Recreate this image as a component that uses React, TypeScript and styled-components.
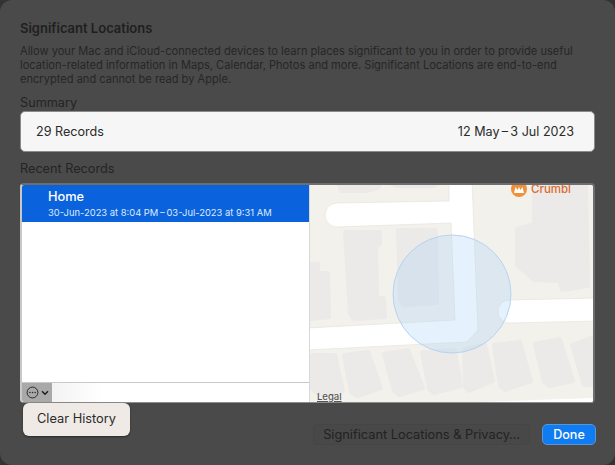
import styled, { createGlobalStyle } from 'styled-components';

const GlobalStyle = createGlobalStyle`
  html, body {
    margin: 0;
    padding: 0;
    width: 615px;
    height: 465px;
    overflow: hidden;
    background: #333333;
    font-family: "Inter", "Liberation Sans", sans-serif;
  }
`;

const Sheet = styled.div`
  position: relative;
  width: 615px;
  height: 465px;
  box-sizing: border-box;
  padding: 20px 20px 0 20px;
  background: #4a4a4a;
  border-radius: 12px;
  color: #222222;
`;

const Title = styled.h1`
  margin: 0;
  height: 17px;
  line-height: 17px;
  font-size: 13px;
  font-weight: 600;
  color: #1f1f1f;
`;

const Description = styled.p`
  margin: 7px 0 0;
  width: 560px;
  font-size: 11.1px;
  line-height: 14px;
  color: #262626;
`;

const SectionLabel = styled.div`
  margin: 8px 0 0;
  height: 17px;
  line-height: 17px;
  font-size: 12.7px;
  color: #242424;
`;

const SummaryBox = styled.div`
  display: flex;
  align-items: center;
  justify-content: space-between;
  box-sizing: border-box;
  height: 41px;
  padding: 0 20px 0 15px;
  background: #f6f6f6;
  border: 1px solid #8a8a8a;
  border-radius: 5px;
  font-size: 12.6px;
  color: #2a2a2a;
`;

const RecordsBox = styled.div`
  display: flex;
  box-sizing: border-box;
  height: 220px;
  margin-top: 6px;
  background: #ffffff;
  border: solid;
  border-width: 2px 2px 1px 2px;
  border-color: #6e6e6e #6e6e6e #8c8c8c #c8c8c8;
  border-radius: 4px;
  overflow: hidden;
`;

const ListColumn = styled.div`
  display: flex;
  flex-direction: column;
  width: 287px;
  flex: none;
  background: #ffffff;
  border-right: 1px solid #d8d8d8;
`;

const ListBody = styled.div`
  flex: 1;
`;

const SelectedRow = styled.div`
  box-sizing: border-box;
  height: 37px;
  padding: 4px 0 0 26px;
  background: #0a63dc;
  color: #ffffff;
`;

const RowTitle = styled.div`
  height: 16px;
  line-height: 16px;
  font-size: 12.8px;
  font-weight: 500;
`;

const RowDates = styled.div`
  height: 13px;
  line-height: 13px;
  margin-top: 1px;
  font-size: 9.4px;
  color: #dfeaff;
`;

const ListFooter = styled.div`
  display: flex;
  height: 19px;
  border-top: 1px solid #c9c9c9;
  background: linear-gradient(90deg, #ececec 0, #ffffff 80px);
`;

const ActionButton = styled.div`
  display: flex;
  align-items: center;
  justify-content: center;
  gap: 2px;
  width: 30px;
  background: #a9a9a9;
  color: #2a2a2a;
`;

const MapPane = styled.div`
  position: relative;
  flex: 1;
  background: #f3f1ec;
  overflow: hidden;
`;

const MapDrawing = styled.svg`
  display: block;
  width: 100%;
  height: 100%;
  filter: blur(0.5px);
`;

const LegalLink = styled.span`
  position: absolute;
  left: 7px;
  bottom: 0;
  font-size: 9.5px;
  font-weight: 500;
  color: #555555;
  text-decoration: underline;
`;

const PoiLabel = styled.span`
  position: absolute;
  top: -4px;
  left: 201px;
  display: flex;
  align-items: center;
  gap: 4px;
  line-height: 8px;
  font-size: 11.5px;
  font-weight: 500;
  color: #dd6a2d;
`;

const PoiBadge = styled.span`
  display: flex;
  align-items: center;
  justify-content: center;
  width: 16px;
  height: 16px;
  border-radius: 50%;
  background: #f0913a;
`;

const Footer = styled.div`
  display: flex;
  justify-content: flex-end;
  align-items: center;
  gap: 12px;
  margin: 21px -1px 0 0;
`;

const SecondaryButton = styled.div`
  box-sizing: border-box;
  height: 21px;
  line-height: 19px;
  padding: 0 9px;
  border-radius: 4px;
  background: #484848;
  border: 1px solid #454545;
  font-size: 12.8px;
  color: #222222;
`;

const PrimaryButton = styled.div`
  box-sizing: border-box;
  width: 54px;
  height: 21px;
  line-height: 19px;
  text-align: center;
  border-radius: 5px;
  background: #0f7cf2;
  border: 1px solid #5a95d8;
  font-size: 12.6px;
  font-weight: 500;
  color: #ffffff;
`;

const Popup = styled.div`
  position: absolute;
  left: 23px;
  top: 403px;
  box-sizing: border-box;
  width: 107px;
  height: 33px;
  line-height: 32px;
  text-align: center;
  border-radius: 6px;
  background: #efeae6;
  box-shadow: 0 1px 2px rgba(0, 0, 0, 0.45);
  font-size: 12.8px;
  color: #2a2a2a;
`;

const buildings = [
  'M29 0L70 0L68 4L55 7L31 7Z',
  'M82 0L126 0L124 2L86 2Z',
  'M35 48L70 48L70 60L66 63L67 114L74 114L75 133L44 135L40 130Z',
  'M88 46L126 46L127 119L93 121L90 116Z',
  'M0 80L8 80L8 89L18 89L19 133L0 135Z',
  'M224 1L276 1L278 102L252 106L250 97L224 96L207 81L207 45L224 40Z',
  'M2 171L25 171L33 207L9 211L2 205Z',
  'M34 171L58 168L71 204L47 212L41 208Z',
  'M74 170L98 166L113 204L89 211L84 207Z',
  'M112 168L145 166L151 202L124 209L119 205Z',
  'M154 165L175 161L183 197L159 207L155 203Z',
  'M184 161L210 158L221 197L195 206L190 202Z',
  'M225 160L250 155L263 197L239 202L234 198Z',
  'M262 161L283 153L283 201L274 201Z',
];

function MapArt() {
  return (
    <MapDrawing viewBox="0 1 283 217" preserveAspectRatio="none">
      <g fill="#ebeae8" stroke="#ebeae8" strokeWidth="4" strokeLinejoin="round">
        {buildings.map((d) => (
          <path key={d} d={d} />
        ))}
      </g>
      <g fill="#ffffff" stroke="#e9e6df" strokeWidth="0.8">
        <path d="M139 -4L162 -4L168 146L157 158L-2 166L-2 144L145 136L141 39L27 43A12 12 0 0 1 27 19L139 17Z" />
        <path d="M290 114L200 116A11.500 11.500 0 0 0 199 139L290 137Z" />
      </g>
      <path d="M170 218L285 214V220H170Z" fill="#ffffff" />
      <circle cx="142" cy="110" r="59" fill="rgb(170,210,248)" fillOpacity="0.3" stroke="#b5d3f0" strokeWidth="1" />
    </MapDrawing>
  );
}

export default function App() {
  return (
    <>
      <GlobalStyle />
      <Sheet>
        <Title>Significant Locations</Title>
        <Description>
          Allow your Mac and iCloud-connected devices to learn places significant to you in order to provide useful
          location-related information in Maps, Calendar, Photos and more. Significant Locations are end-to-end
          encrypted and cannot be read by Apple.
        </Description>
        <SectionLabel>Summary</SectionLabel>
        <SummaryBox>
          <span>29 Records</span>
          <span>12 May{'\u2009'}–{'\u2009'}3 Jul 2023</span>
        </SummaryBox>
        <SectionLabel>Recent Records</SectionLabel>
        <RecordsBox>
          <ListColumn>
            <ListBody>
              <SelectedRow>
                <RowTitle>Home</RowTitle>
                <RowDates>30-Jun-2023 at 8:04 PM{'\u2009'}–{'\u2009'}03-Jul-2023 at 9:31 AM</RowDates>
              </SelectedRow>
            </ListBody>
            <ListFooter>
              <ActionButton>
                <svg width="13" height="13" viewBox="0 0 13 13">
                  <circle cx="6.5" cy="6.5" r="5.4" fill="none" stroke="#2a2a2a" strokeWidth="1" />
                  <circle cx="3.9" cy="6.5" r="0.8" fill="#2a2a2a" />
                  <circle cx="6.5" cy="6.5" r="0.8" fill="#2a2a2a" />
                  <circle cx="9.1" cy="6.5" r="0.8" fill="#2a2a2a" />
                </svg>
                <svg width="8" height="6" viewBox="0 0 8 6">
                  <path d="M1 1.2l3 3 3-3" fill="none" stroke="#1f1f1f" strokeWidth="1.5" />
                </svg>
              </ActionButton>
            </ListFooter>
          </ListColumn>
          <MapPane>
            <MapArt />
            <PoiLabel>
              <PoiBadge>
                <svg width="12" height="9" viewBox="0 0 12 9">
                  <path d="M1 8L2.500 2L4.500 5L6 2L7.500 5L9.500 2L11 8Z" fill="#ffffff" />
                </svg>
              </PoiBadge>
              Crumbl
            </PoiLabel>
            <LegalLink>Legal</LegalLink>
          </MapPane>
        </RecordsBox>
        <Footer>
          <SecondaryButton>Significant Locations &amp; Privacy…</SecondaryButton>
          <PrimaryButton>Done</PrimaryButton>
        </Footer>
        <Popup>Clear History</Popup>
      </Sheet>
    </>
  );
}
